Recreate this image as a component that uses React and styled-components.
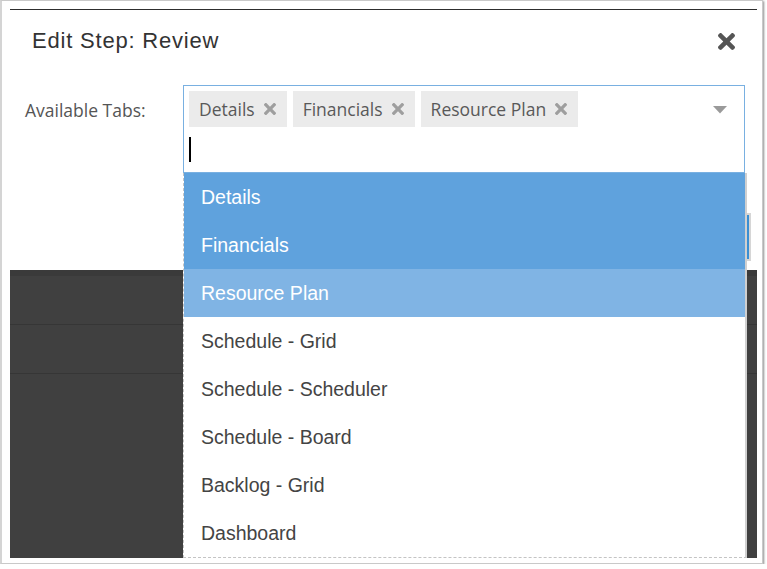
import React from 'react'
import styled, { createGlobalStyle } from 'styled-components'

const GlobalStyle = createGlobalStyle`
  html, body {
    margin: 0;
    padding: 0;
    background: #fff;
  }
  * { box-sizing: border-box; }
`

const Window = styled.div`
  width: 763px;
  height: 564px;
  border: 1px solid #c9c9c9;
  border-left: 2px solid #d4d4d4;
  box-shadow: 1px 1px 2px rgba(0, 0, 0, 0.45);
  padding: 0 5px 0 8px;
  display: flex;
  flex-direction: column;
  background: #fff;
`

const TopRule = styled.div`
  height: 9px;
  flex-shrink: 0;
  border-bottom: 1px solid #2e2e2e;
`

const Header = styled.div`
  display: flex;
  align-items: center;
  justify-content: space-between;
  padding: 18px 22px 0 22px;
  height: 44px;
`

const Title = styled.h4`
  margin: 0;
  font-family: "Liberation Sans", Arial, sans-serif;
  font-weight: normal;
  font-size: 22px;
  letter-spacing: 0.8px;
  line-height: 26px;
  color: #333;
`

const CloseButton = styled.button`
  border: 0;
  padding: 0;
  background: none;
  color: #555;
  display: flex;
  width: 17px;
  height: 17px;
`

const FormRow = styled.div`
  display: flex;
  align-items: flex-start;
  margin-top: 31px;
  padding-left: 15px;
`

const Label = styled.label`
  width: 158px;
  margin-top: 13px;
  font-family: "Open Sans", "Noto Sans", sans-serif;
  font-size: 17.5px;
  line-height: 24px;
  color: #555;
`

const SelectBox = styled.div`
  position: relative;
  width: 562px;
  height: 88px;
  border: 1px solid #79b0e1;
  padding: 5px 0 0 5px;
  display: flex;
  align-items: flex-start;
`

const TagArea = styled.div`
  flex: 1;
  display: flex;
  flex-wrap: wrap;
  gap: 10px 6px;
`

const Tag = styled.span`
  display: inline-flex;
  align-items: center;
  gap: 9px;
  height: 36px;
  padding: 0 11px 0 10px;
  background: #ebebeb;
  font-family: "Open Sans", "Noto Sans", sans-serif;
  font-size: 17.5px;
  color: #595959;
`

const TagRemove = styled.span`
  display: flex;
  width: 12px;
  height: 12px;
  color: #9e9e9e;
`

const InputLine = styled.div`
  flex-basis: 100%;
  height: 25px;
  display: flex;
`

const Cursor = styled.span`
  width: 2px;
  height: 25px;
  background: #000;
`

const Caret = styled.span`
  display: flex;
  margin: 15px 17px 0 0;
  width: 14px;
  height: 8px;
  color: #9a9a9a;
`

const Menu = styled.ul`
  position: absolute;
  top: calc(100% + 1px);
  left: -1px;
  width: 564px;
  margin: 0;
  padding: 0;
  list-style: none;
  background: #fff;
  border-left: 1px dashed #c4c4c4;
  border-bottom: 1px dashed #c4c4c4;
  border-right: 2px solid #d0d0d0;
  z-index: 5;
`

const MenuItem = styled.li`
  height: 48px;
  display: flex;
  align-items: center;
  padding-left: 17px;
  font-family: "Liberation Sans", Arial, sans-serif;
  font-size: 19.5px;
  color: ${p => (p.$state ? '#fff' : '#444')};
  background: ${p =>
    p.$state === 'selected' ? '#5fa2dd' : p.$state === 'hover' ? '#80b4e4' : '#fff'};
`

const BelowRow = styled.div`
  height: 97px;
  display: flex;
  justify-content: flex-end;
  align-items: flex-start;
  padding-right: 6px;
`

const SaveButton = styled.button`
  margin-top: 40px;
  width: 80px;
  height: 48px;
  border: 2px solid #d6d6d6;
  background: #3a8fd3;
`

const DarkPanel = styled.div`
  height: 288px;
  background: #404040;
  border-top: 6px solid #3a3a3a;
`

const DarkRow = styled.div`
  height: 49px;
  border-bottom: 1px solid #363636;
`

const TimesIcon = () => (
  <svg width="100%" height="100%" viewBox="0 80 352 352" fill="currentColor">
    <path d="M242.72 256l100.07-100.07c12.28-12.28 12.28-32.19 0-44.48l-22.24-22.24c-12.28-12.28-32.19-12.28-44.48 0L176 189.28 75.93 89.21c-12.28-12.28-32.19-12.28-44.48 0L9.21 111.45c-12.28 12.28-12.28 32.19 0 44.48L109.28 256 9.21 356.07c-12.28 12.28-12.28 32.19 0 44.48l22.24 22.24c12.28 12.28 32.2 12.28 44.48 0L176 322.72l100.07 100.07c12.28 12.28 32.2 12.28 44.48 0l22.24-22.24c12.28-12.28 12.28-32.19 0-44.48L242.72 256z" />
  </svg>
)

const tags = ['Details', 'Financials', 'Resource Plan']

const options = [
  { name: 'Details', state: 'selected' },
  { name: 'Financials', state: 'selected' },
  { name: 'Resource Plan', state: 'hover' },
  { name: 'Schedule - Grid' },
  { name: 'Schedule - Scheduler' },
  { name: 'Schedule - Board' },
  { name: 'Backlog - Grid' },
  { name: 'Dashboard' },
]

export default function App() {
  return (
    <>
      <GlobalStyle />
      <Window>
        <TopRule />
        <Header>
          <Title>Edit Step: Review</Title>
          <CloseButton aria-label="Close">
            <TimesIcon />
          </CloseButton>
        </Header>
        <FormRow>
          <Label>Available Tabs:</Label>
          <SelectBox>
            <TagArea>
              {tags.map(t => (
                <Tag key={t}>
                  {t}
                  <TagRemove>
                    <TimesIcon />
                  </TagRemove>
                </Tag>
              ))}
              <InputLine>
                <Cursor />
              </InputLine>
            </TagArea>
            <Caret>
              <svg width="14" height="8" viewBox="0 0 14 8" fill="currentColor">
                <path d="M0 0h14L7 7.5z" />
              </svg>
            </Caret>
            <Menu>
              {options.map(o => (
                <MenuItem key={o.name} $state={o.state}>
                  {o.name}
                </MenuItem>
              ))}
            </Menu>
          </SelectBox>
        </FormRow>
        <BelowRow>
          <SaveButton />
        </BelowRow>
        <DarkPanel>
          <DarkRow />
          <DarkRow />
        </DarkPanel>
      </Window>
    </>
  )
}
